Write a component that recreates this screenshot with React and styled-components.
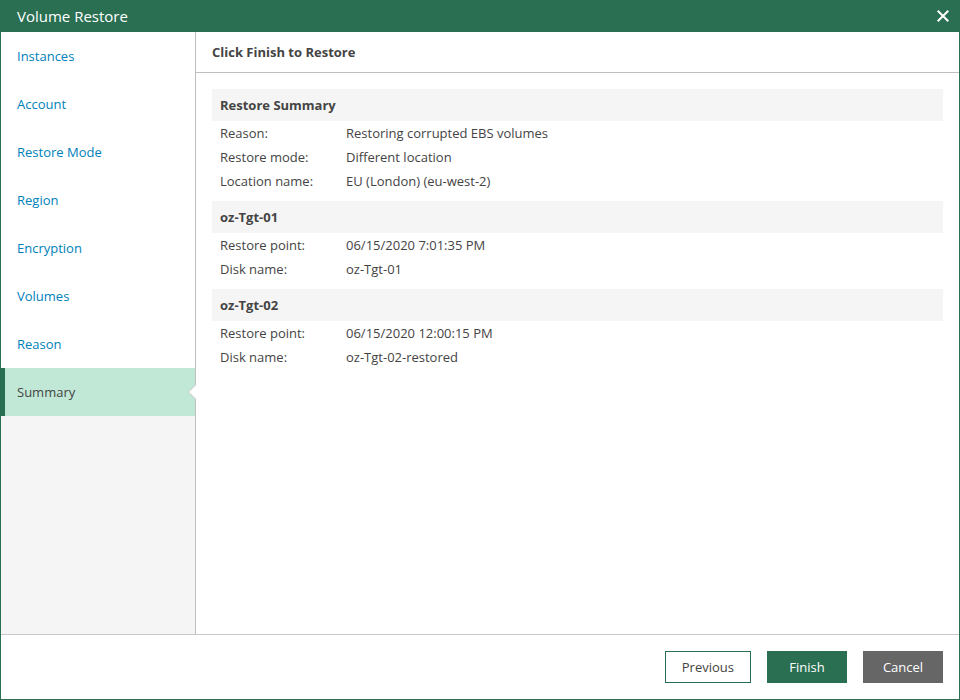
import React from 'react'
import styled, { createGlobalStyle } from 'styled-components'

const steps = [
  'Instances',
  'Account',
  'Restore Mode',
  'Region',
  'Encryption',
  'Volumes',
  'Reason',
  'Summary',
]

const sections = [
  {
    title: 'Restore Summary',
    rows: [
      ['Reason:', 'Restoring corrupted EBS volumes'],
      ['Restore mode:', 'Different location'],
      ['Location name:', 'EU (London) (eu-west-2)'],
    ],
  },
  {
    title: 'oz-Tgt-01',
    rows: [
      ['Restore point:', '06/15/2020 7:01:35 PM'],
      ['Disk name:', 'oz-Tgt-01'],
    ],
  },
  {
    title: 'oz-Tgt-02',
    rows: [
      ['Restore point:', '06/15/2020 12:00:15 PM'],
      ['Disk name:', 'oz-Tgt-02-restored'],
    ],
  },
]

export default function App() {
  return (
    <Window>
      <GlobalStyle />
      <TitleBar>
        <Title>Volume Restore</Title>
        <CloseButton type="button" aria-label="Close">
          <svg width="12" height="12" viewBox="0 0 12 12">
            <path d="M0.7 0.7L11.3 11.3M11.3 0.7L0.7 11.3" stroke="#fff" strokeWidth="2" />
          </svg>
        </CloseButton>
      </TitleBar>
      <Body>
        <Sidebar>
          {steps.map((step) => (
            <StepItem key={step} label={step} active={step === 'Summary'} />
          ))}
        </Sidebar>
        <Content>
          <ContentHeader>Click Finish to Restore</ContentHeader>
          <Summary>
            {sections.map((section) => (
              <SummarySection key={section.title} {...section} />
            ))}
          </Summary>
        </Content>
      </Body>
      <Footer>
        <Button type="button" $variant="outline">
          Previous
        </Button>
        <Button type="button" $variant="primary">
          Finish
        </Button>
        <Button type="button" $variant="secondary">
          Cancel
        </Button>
      </Footer>
    </Window>
  )
}

const StepItem = ({ label, active }) => (
  <Step href="#" $active={active} aria-current={active ? 'step' : undefined}>
    {label}
    {active && (
      <Notch width="8" height="16" viewBox="0 0 8 16" aria-hidden="true">
        <path d="M8 0.5L0.5 8L8 15.5Z" fill="#fff" />
        <path d="M7.5 1L0.5 8L7.5 15" fill="none" stroke="#c8c8c8" />
      </Notch>
    )}
  </Step>
)

const SummarySection = ({ title, rows }) => (
  <section>
    <SectionTitle>{title}</SectionTitle>
    <Table>
      <tbody>
        {rows.map(([label, value]) => (
          <tr key={label}>
            <th scope="row">{label}</th>
            <td>{value}</td>
          </tr>
        ))}
      </tbody>
    </Table>
  </section>
)

const GlobalStyle = createGlobalStyle`
  * {
    box-sizing: border-box;
  }
  body {
    margin: 0;
    color: #444;
    background-color: #fff;
    font-family: 'Open Sans', sans-serif;
    font-size: 13px;
    line-height: 24px;
  }
`

const Window = styled.div`
  display: flex;
  flex-direction: column;

  min-height: 100vh;

  border: 1px solid #2a6f52;
  border-top: none;
`

const TitleBar = styled.header`
  display: flex;
  justify-content: space-between;
  align-items: center;

  height: 32px;
  padding: 0 10px 0 16px;

  color: #fff;
  background-color: #2a6f52;
`

const Title = styled.h1`
  margin: 0;

  font-size: 15px;
  font-weight: 400;
`

const CloseButton = styled.button`
  display: flex;

  padding: 0;

  border: none;
  background: none;
  cursor: pointer;
`

const Body = styled.div`
  display: flex;
  flex: 1;
`

const Sidebar = styled.nav`
  flex: 0 0 195px;

  border-right: 1px solid #bfbfbf;
  background-color: #f5f5f5;
`

const Step = styled.a`
  position: relative;
  display: flex;
  align-items: center;

  height: 48px;
  padding-left: ${({ $active }) => ($active ? '12px' : '16px')};

  border-left: ${({ $active }) => ($active ? '4px solid #2a6f52' : 'none')};
  color: ${({ $active }) => ($active ? '#444' : '#007fba')};
  background-color: ${({ $active }) => ($active ? '#c1e8d6' : '#fff')};

  text-decoration: none;
`

// 사이드바 경계선 위에 겹쳐지는 화살표
const Notch = styled.svg`
  position: absolute;
  top: 16px;
  right: -1px;
`

const Content = styled.main`
  flex: 1;
`

const ContentHeader = styled.h2`
  margin: 0;
  padding: 8px 16px;

  border-bottom: 1px solid #bfbfbf;

  font-size: 13px;
  font-weight: 700;
`

const Summary = styled.div`
  padding: 16px;
`

const SectionTitle = styled.h3`
  margin: 0;
  padding: 4px 8px;

  background-color: #f5f5f5;

  font-size: 13px;
  font-weight: 700;
`

const Table = styled.table`
  margin-bottom: 8px;

  border-collapse: collapse;

  & th {
    width: 134px;
    padding: 0 0 0 8px;

    font-weight: 400;
    text-align: left;
  }
  & td {
    padding: 0;
  }
`

const Footer = styled.footer`
  display: flex;
  justify-content: flex-end;
  gap: 16px;

  padding: 16px;

  border-top: 1px solid #c8c8c8;
`

const buttonColors = {
  outline: ['#444', '#fff', '#2a6f52'],
  primary: ['#fff', '#2a6f52', '#2a6f52'],
  secondary: ['#fff', '#666', '#666'],
}

const Button = styled.button`
  min-width: 80px;
  height: 32px;
  padding: 0 16px;

  border: 1px solid ${({ $variant }) => buttonColors[$variant][2]};
  color: ${({ $variant }) => buttonColors[$variant][0]};
  background-color: ${({ $variant }) => buttonColors[$variant][1]};

  font: inherit;
  cursor: pointer;
`
